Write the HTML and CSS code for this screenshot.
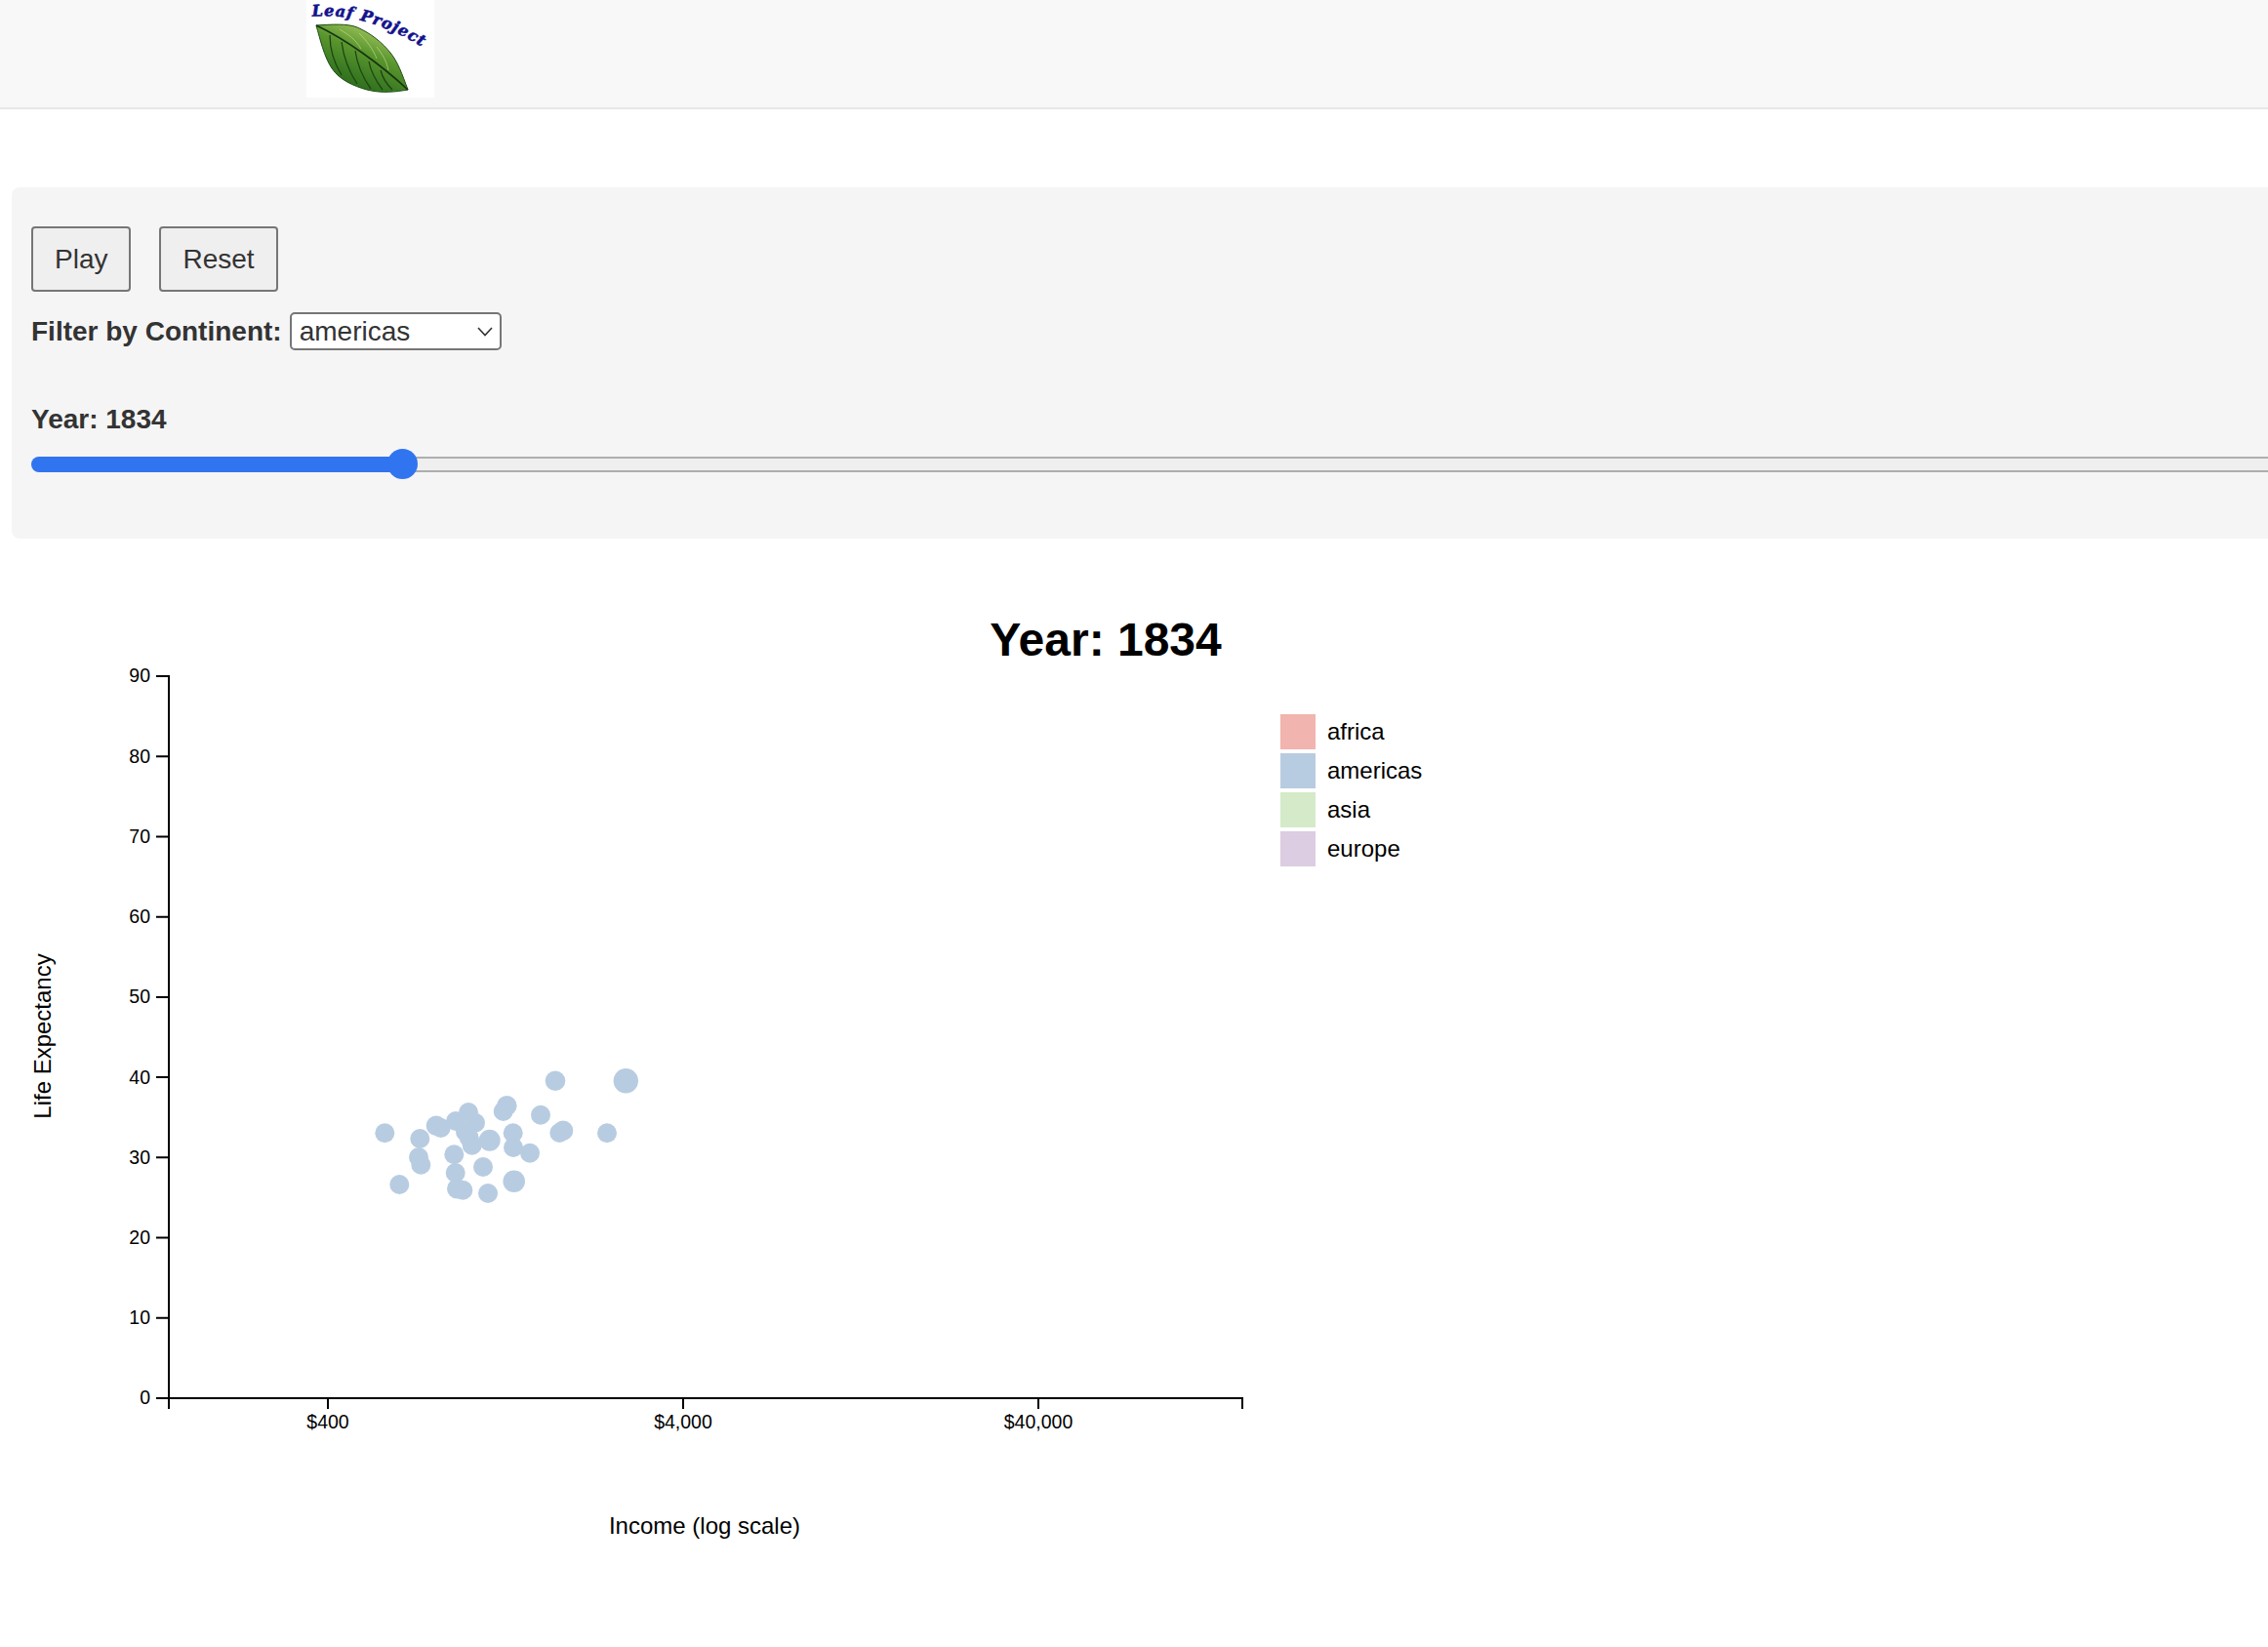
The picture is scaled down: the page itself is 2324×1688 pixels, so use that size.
FILE: index.html
```html
<!DOCTYPE html>
<html lang="en">
<head>
<meta charset="utf-8">
<title>Leaf Project</title>
<link rel="stylesheet" href="styles.css">
</head>
<body>
<header class="topbar">
  <svg class="logo" viewBox="0 0 131 100" width="131" height="100" aria-label="Leaf Project logo">
    <defs>
      <linearGradient id="leafFill" x1="0.78" y1="0.1" x2="0.3" y2="0.95">
        <stop offset="0" stop-color="#a8c862"/>
        <stop offset="0.4" stop-color="#5a962e"/>
        <stop offset="0.75" stop-color="#3a7a22"/>
        <stop offset="1" stop-color="#2a6a1a"/>
      </linearGradient>
      <path id="logoArc" d="M6 17 Q62 11 128 54"/>
    </defs>
    <rect class="logo-bg" width="131" height="100"/>
    <path d="M10 26 C26 25 42 24 52 28 C66 34 78 44 86 54 C94 64 98 76 104 92 C92 94 78 96 62 92 C48 88 34 82 26 70 C18 58 14 40 10 26Z" fill="url(#leafFill)" stroke="#1f4d16" stroke-width="1"/>
    <path class="vein-main" d="M10 26 C40 40 76 66 104 92"/>
    <path class="vein" d="M24 36 C24 50 28 64 36 77"/>
    <path class="vein" d="M36 43 C38 58 44 74 52 86"/>
    <path class="vein" d="M50 52 C52 66 58 80 66 91"/>
    <path class="vein" d="M64 63 C66 74 72 84 78 92"/>
    <path class="vein" d="M76 72 C78 80 82 86 88 92"/>
    <path class="vein-light" d="M34 30 C44 36 50 40 56 50"/>
    <path class="vein-light" d="M54 34 C62 42 68 50 72 60"/>
    <path class="vein-light" d="M72 48 C78 56 82 62 84 72"/>
    <text class="logo-text"><textPath href="#logoArc">Leaf Project</textPath></text>
  </svg>
</header>

<section class="panel">
  <div class="buttons">
    <button class="btn" type="button">Play</button>
    <button class="btn" type="button">Reset</button>
  </div>
  <div class="filter">
    <label class="strong" for="continent">Filter by Continent:</label>
    <span class="select-wrap">
      <select id="continent" class="select">
        <option>americas</option>
        <option>africa</option>
        <option>asia</option>
        <option>europe</option>
      </select>
      <svg class="chevron" viewBox="0 0 16 10" width="16" height="10"><path d="M1 1 L8 8.5 L15 1"/></svg>
    </span>
  </div>
  <div class="strong year">Year: 1834</div>
  <input class="slider" type="range" min="1800" max="2100" value="1834" aria-label="Year">
</section>

<svg class="chart" viewBox="0 552 1500 1136" width="1500" height="1136">
  <text class="title" x="1133" y="672">Year: 1834</text>

  <g class="axis">
    <path d="M160 693 H173 V1433 H1273 V1444"/>
    <path d="M173 1433 V1444"/>
    <path d="M160 775.2 H173 M160 857.4 H173 M160 939.7 H173 M160 1021.9 H173 M160 1104.1 H173 M160 1186.3 H173 M160 1268.6 H173 M160 1350.8 H173 M160 1433 H173"/>
    <path d="M336 1433 V1444 M700 1433 V1444 M1064 1433 V1444"/>
  </g>
  <g class="tick-y">
    <text x="154" y="699">90</text>
    <text x="154" y="782">80</text>
    <text x="154" y="864">70</text>
    <text x="154" y="946">60</text>
    <text x="154" y="1028">50</text>
    <text x="154" y="1111">40</text>
    <text x="154" y="1193">30</text>
    <text x="154" y="1275">20</text>
    <text x="154" y="1357">10</text>
    <text x="154" y="1439">0</text>
  </g>
  <g class="tick-x">
    <text x="336" y="1464">$400</text>
    <text x="700" y="1464">$4,000</text>
    <text x="1064" y="1464">$40,000</text>
  </g>
  <text class="axis-title" x="722" y="1572">Income (log scale)</text>
  <text class="axis-title" transform="translate(52 1062) rotate(-90)">Life Expectancy</text>

  <g class="dots">
    <circle cx="394.3" cy="1161.3" r="10"/>
    <circle cx="430.3" cy="1167" r="10"/>
    <circle cx="429" cy="1186" r="10"/>
    <circle cx="431.3" cy="1193.7" r="10"/>
    <circle cx="409.3" cy="1214" r="10"/>
    <circle cx="447" cy="1153.7" r="10.3"/>
    <circle cx="451.7" cy="1156" r="10"/>
    <circle cx="467" cy="1149" r="10"/>
    <circle cx="480" cy="1140" r="10"/>
    <circle cx="487" cy="1150.7" r="10"/>
    <circle cx="477" cy="1160" r="10"/>
    <circle cx="480.7" cy="1166" r="10"/>
    <circle cx="483.7" cy="1173.7" r="10"/>
    <circle cx="501.7" cy="1168.7" r="11"/>
    <circle cx="465.3" cy="1183.3" r="10"/>
    <circle cx="466.7" cy="1202" r="10"/>
    <circle cx="495" cy="1196" r="10"/>
    <circle cx="468.3" cy="1218.3" r="10.3"/>
    <circle cx="474.3" cy="1219.7" r="10"/>
    <circle cx="500" cy="1223" r="10"/>
    <circle cx="526.7" cy="1210.7" r="11.3"/>
    <circle cx="525.7" cy="1161.3" r="10"/>
    <circle cx="526" cy="1176" r="10"/>
    <circle cx="543" cy="1181.7" r="10"/>
    <circle cx="515.7" cy="1139" r="10"/>
    <circle cx="519.3" cy="1133.3" r="10.3"/>
    <circle cx="554" cy="1142.7" r="10"/>
    <circle cx="569" cy="1107.7" r="10.3"/>
    <circle cx="573.3" cy="1161" r="10"/>
    <circle cx="577" cy="1158.7" r="10.3"/>
    <circle cx="622" cy="1161.3" r="10"/>
    <circle cx="641.3" cy="1107.7" r="12.7"/>
  </g>

  <g class="legend">
    <rect class="swatch-africa" x="1312" y="732" width="36" height="36"/>
    <text x="1360" y="758">africa</text>
    <rect class="swatch-americas" x="1312" y="772" width="36" height="36"/>
    <text x="1360" y="798">americas</text>
    <rect class="swatch-asia" x="1312" y="812" width="36" height="36"/>
    <text x="1360" y="838">asia</text>
    <rect class="swatch-europe" x="1312" y="852" width="36" height="36"/>
    <text x="1360" y="878">europe</text>
  </g>
</svg>
</body>
</html>
```

FILE: styles.css
```css
html, body {
  margin: 0;
  padding: 0;
  background: #fff;
  overflow-x: hidden;
}
body {
  width: 2324px;
  font-family: "Liberation Sans", Arial, sans-serif;
  color: #333;
}

/* Top bar */
.topbar {
  height: 110px;
  background: #f8f8f8;
  border-bottom: 2px solid #e7e7e7;
  padding-left: 314px;
}
.logo { display: block; }
.logo-bg { fill: #fff; }
.vein-main { fill: none; stroke: #17330f; stroke-width: 1.6; }
.vein { fill: none; stroke: #1d4413; stroke-width: 1.3; }
.vein-light { fill: none; stroke: #c7dd8c; stroke-width: 0.9; opacity: .7; }
.logo-text {
  font-family: "DejaVu Serif", serif;
  font-style: italic;
  font-weight: 700;
  font-size: 16px;
  letter-spacing: .9px;
  fill: #12128c;
  stroke: #12128c;
  stroke-width: .6;
}

/* Control panel */
.panel {
  box-sizing: border-box;
  width: 3290px;
  height: 360px;
  margin: 80px 0 0 12px;
  padding: 40px 20px 0;
  background: #f5f5f5;
  border-radius: 8px;
}
.buttons {
  display: flex;
  gap: 29px;
}
.btn {
  box-sizing: border-box;
  height: 67px;
  padding: 0 22px;
  font: 28px "Liberation Sans", Arial, sans-serif;
  color: #333;
  background: #efefef;
  border: 2px solid #767676;
  border-radius: 4px;
}
.filter {
  display: flex;
  align-items: center;
  gap: 8px;
  margin-top: 21px;
  height: 39px;
}
.strong {
  font-size: 28px;
  font-weight: 700;
  color: #333;
}
.select-wrap {
  position: relative;
  display: block;
  width: 217px;
  height: 39px;
}
.select {
  appearance: none;
  -webkit-appearance: none;
  box-sizing: border-box;
  display: block;
  width: 217px;
  height: 39px;
  padding: 0 0 0 8px;
  font: 28px "Liberation Sans", Arial, sans-serif;
  color: #333;
  background: #fff;
  border: 2px solid #767676;
  border-radius: 5px;
}
.chevron {
  position: absolute;
  right: 9px;
  top: 15px;
  pointer-events: none;
}
.chevron path { fill: none; stroke: #333; stroke-width: 1.6; }
.year {
  margin-top: 56px;
  line-height: 30px;
}
.slider {
  -webkit-appearance: none;
  appearance: none;
  display: block;
  width: 3248px;
  height: 31px;
  margin: 15px 0 0;
  padding: 0;
  background: transparent;
}
.slider::-webkit-slider-runnable-track {
  height: 16px;
  border-radius: 8px;
  background:
    linear-gradient(#3174f0, #3174f0) 0 0 / 380px 100% no-repeat,
    linear-gradient(#aeaeae, #aeaeae) 0 0 / 100% 2px no-repeat,
    linear-gradient(#aeaeae, #aeaeae) 0 100% / 100% 2px no-repeat,
    #efefef;
}
.slider::-webkit-slider-thumb {
  -webkit-appearance: none;
  appearance: none;
  width: 31px;
  height: 31px;
  margin-top: -7.5px;
  border-radius: 50%;
  background: #3174f0;
  border: 0;
}

/* Chart */
.chart {
  display: block;
  font-family: "Liberation Sans", Arial, sans-serif;
}
.title {
  font-size: 48px;
  font-weight: 700;
  text-anchor: middle;
  fill: #000;
}
.axis path {
  fill: none;
  stroke: #000;
  stroke-width: 2;
}
.tick-y text, .tick-x text {
  font-size: 19.5px;
  fill: #000;
}
.tick-y text { text-anchor: end; }
.tick-x text { text-anchor: middle; }
.axis-title {
  font-size: 24px;
  text-anchor: middle;
  fill: #000;
}
.dots circle { fill: #b8cce1; }
.legend text { font-size: 24px; fill: #000; }
.swatch-africa { fill: #f1b4ae; }
.swatch-americas { fill: #b8cce1; }
.swatch-asia { fill: #d4eac8; }
.swatch-europe { fill: #dccde2; }
```
